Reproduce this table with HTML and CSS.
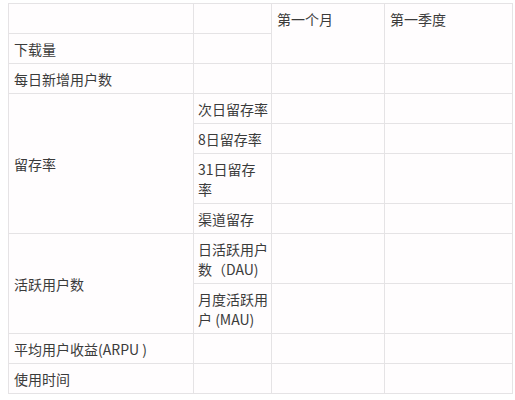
FILE: index.html
```html
<!DOCTYPE html>
<html lang="zh">
<head>
<meta charset="utf-8">
<link rel="stylesheet" href="styles.css">
</head>
<body>
<table class="grid">
  <colgroup>
    <col class="c1">
    <col class="c2">
    <col class="c3">
    <col class="c4">
  </colgroup>
  <tbody>
    <tr>
      <td>&nbsp;</td>
      <td>&nbsp;</td>
      <td class="top" rowspan="2">第一个月</td>
      <td class="top" rowspan="2">第一季度</td>
    </tr>
    <tr>
      <td>下载量</td>
      <td></td>
    </tr>
    <tr>
      <td>每日新增用户数</td>
      <td></td>
      <td></td>
      <td></td>
    </tr>
    <tr>
      <td rowspan="4">留存率</td>
      <td class="sub">次日留存率</td>
      <td></td>
      <td></td>
    </tr>
    <tr>
      <td class="sub">8日留存率</td>
      <td></td>
      <td></td>
    </tr>
    <tr>
      <td class="sub">31日留存率</td>
      <td></td>
      <td></td>
    </tr>
    <tr>
      <td class="sub">渠道留存</td>
      <td></td>
      <td></td>
    </tr>
    <tr>
      <td rowspan="2">活跃用户数</td>
      <td class="sub">日活跃用户数（DAU)</td>
      <td></td>
      <td></td>
    </tr>
    <tr>
      <td class="sub">月度活跃用户 (MAU)</td>
      <td></td>
      <td></td>
    </tr>
    <tr>
      <td>平均用户收益(ARPU )</td>
      <td></td>
      <td></td>
      <td></td>
    </tr>
    <tr>
      <td>使用时间</td>
      <td></td>
      <td></td>
      <td></td>
    </tr>
  </tbody>
</table>
</body>
</html>
```

FILE: styles.css
```css
html, body {
  margin: 0;
  padding: 0;
  background: #ffffff;
}

body {
  padding: 3px 0 0 8px;
  font-family: "Noto Sans CJK SC", "Noto Sans", sans-serif;
  font-size: 14px;
  line-height: 20px;
  color: #3b3b3b;
}

.grid {
  border-collapse: collapse;
  table-layout: fixed;
  width: 504px;
  background: #fffdfe;
}

.c1 { width: 185px; }
.c2 { width: 78px; }
.c3 { width: 113px; }
.c4 { width: 128px; }

.grid td {
  border: 1px solid #e5e3e5;
  padding: 5px 3px 4px 5px;
  vertical-align: middle;
  height: 20px;
}

.grid td.sub {
  padding-left: 4px;
  padding-right: 3px;
}

.grid td.top {
  vertical-align: top;
}
```
